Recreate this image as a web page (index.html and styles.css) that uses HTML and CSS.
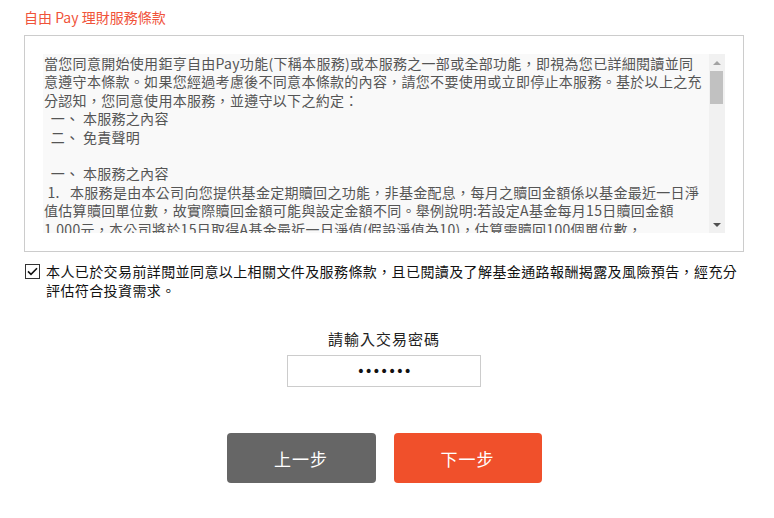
FILE: index.html
```html
<!DOCTYPE html>
<html lang="zh-Hant">
<head>
<meta charset="utf-8">
<title>自由 Pay 理財服務條款</title>
<link rel="stylesheet" href="styles.css">
</head>
<body>
<div class="page">
  <h1 class="title">自由 Pay 理財服務條款</h1>
  <div class="terms-box">
    <div class="terms">
      <div class="terms-text">當您同意開始使用鉅亨自由Pay功能(下稱本服務)或本服務之一部或全部功能，即視為您已詳細閱讀並同
意遵守本條款。如果您經過考慮後不同意本條款的內容，請您不要使用或立即停止本服務。基於以上之充
分認知，您同意使用本服務，並遵守以下之約定：
  一、 本服務之內容
  二、 免責聲明

  一、 本服務之內容
 1.   本服務是由本公司向您提供基金定期贖回之功能，非基金配息，每月之贖回金額係以基金最近一日淨
值估算贖回單位數，故實際贖回金額可能與設定金額不同。舉例說明:若設定A基金每月15日贖回金額
1,000元，本公司將於15日取得A基金最近一日淨值(假設淨值為10)，估算需贖回100個單位數，
實際贖回金額將依贖回當日之淨值計算。</div>
      <div class="scrollbar">
        <div class="sb-btn"><span class="arrow-up"></span></div>
        <div class="sb-thumb"></div>
        <div class="sb-track"></div>
        <div class="sb-btn"><span class="arrow-down"></span></div>
      </div>
    </div>
  </div>
  <label class="agree">
    <span class="checkbox">
      <svg width="15" height="15" viewBox="0 0 15 15"><rect x="0.5" y="0.5" width="14" height="14" fill="#fff" stroke="#333"/><path d="M3 7.4 L6 10.4 L12 4.2" fill="none" stroke="#111" stroke-width="1.6"/></svg>
    </span>
    <span class="agree-text">本人已於交易前詳閱並同意以上相關文件及服務條款，且已閱讀及了解基金通路報酬揭露及風險預告，經充分<br>評估符合投資需求。</span>
  </label>
  <div class="password">
    <div class="pw-label">請輸入交易密碼</div>
    <div class="pw-input">•••••••</div>
  </div>
  <div class="actions">
    <button class="btn btn-prev">上一步</button>
    <button class="btn btn-next">下一步</button>
  </div>
</div>
</body>
</html>
```
FILE: styles.css
```css
* { box-sizing: border-box; }
body {
  margin: 0;
  background: #fff;
  font-family: "Noto Sans CJK TC", "Noto Sans", sans-serif;
}
.page {
  width: 720px;
  margin-left: 24px;
  padding-top: 7px;
}
.title {
  margin: 0;
  font-size: 14px;
  font-weight: normal;
  line-height: 20px;
  color: #f0533a;
}
.terms-box {
  margin-top: 8px;
  border: 1px solid #ccc;
  padding: 18px;
  height: 217px;
}
.terms {
  display: flex;
  height: 179px;
  overflow: hidden;
  background: #f9f9f9;
}
.terms-text {
  flex: 1;
  padding-left: 1px;
  white-space: pre;
  font-size: 14px;
  letter-spacing: 0.3px;
  line-height: 18.4px;
  color: #555;
  overflow: hidden;
}
.scrollbar {
  width: 16px;
  background: #f1f1f1;
  display: flex;
  flex-direction: column;
}
.sb-btn {
  height: 17px;
  display: flex;
  align-items: center;
  justify-content: center;
}
.arrow-up {
  width: 0; height: 0;
  border-left: 4px solid transparent;
  border-right: 4px solid transparent;
  border-bottom: 4px solid #a3a3a3;
}
.arrow-down {
  width: 0; height: 0;
  border-left: 4px solid transparent;
  border-right: 4px solid transparent;
  border-top: 4px solid #505050;
}
.sb-thumb {
  height: 33px;
  margin: 0 2px 0 1px;
  background: #c1c1c1;
}
.sb-track { flex: 1; }
.agree {
  display: flex;
  align-items: flex-start;
  gap: 6px;
  margin-top: 10px;
  padding-left: 1px;
}
.checkbox {
  display: flex;
  padding-top: 2px;
}
.checkbox svg { display: block; }
.agree-text {
  font-size: 14px;
  letter-spacing: 0.4px;
  line-height: 19px;
  color: #111;
  white-space: nowrap;
}
.password {
  margin-top: 29px;
  display: flex;
  flex-direction: column;
  align-items: center;
}
.pw-label {
  font-size: 15px;
  letter-spacing: 1px;
  line-height: 20px;
  color: #222;
}
.pw-input {
  margin-top: 6px;
  width: 194px;
  height: 32px;
  border: 1px solid #ccc;
  display: flex;
  align-items: center;
  justify-content: center;
  font-family: "DejaVu Sans", sans-serif;
  font-size: 14px;
  letter-spacing: -0.5px;
  color: #111;
}
.actions {
  margin-top: 46px;
  display: flex;
  justify-content: center;
  gap: 18px;
}
.btn {
  width: 149px;
  height: 50px;
  border: none;
  border-radius: 4px;
  color: #fff;
  font-family: "Noto Sans CJK TC", sans-serif;
  font-size: 17px;
  letter-spacing: 1px;
  padding: 0;
}
.btn-prev { background: #666; }
.btn-next { background: #f0502b; width: 148px; }
```
